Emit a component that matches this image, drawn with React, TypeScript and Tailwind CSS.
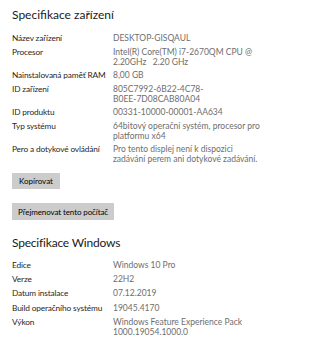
const device: [string, string[]][] = [
  ['Název zařízení', ['DESKTOP-GISQAUL']],
  ['Procesor', ['Intel(R) Core(TM) i7-2670QM CPU @', '2.20GHz   2.20 GHz']],
  ['Nainstalovaná paměť RAM', ['8,00 GB']],
  ['ID zařízení', ['805C7992-6B22-4C78-', 'B0EE-7D08CAB80A04']],
  ['ID produktu', ['00331-10000-00001-AA634']],
  ['Typ systému', ['64bitový operační systém, procesor pro', 'platformu x64']],
  ['Pero a dotykové ovládání', ['Pro tento displej není k dispozici', 'zadávání perem ani dotykové zadávání.']],
]

const windows: [string, string[]][] = [
  ['Edice', ['Windows 10 Pro']],
  ['Verze', ['22H2']],
  ['Datum instalace', ['07.12.2019']],
  ['Build operačního systému', ['19045.4170']],
  ['Výkon', ['Windows Feature Experience Pack', '1000.19054.1000.0']],
]

function SpecRows({ rows, gap }: { rows: [string, string[]][]; gap: string }) {
  return (
    <div className={`flex flex-col ${gap}`}>
      {rows.map(([label, value]) => (
        <div key={label} className="flex items-baseline leading-[10px]">
          <div className="w-[101px] shrink-0 whitespace-nowrap text-[8.3px] tracking-[-0.15px] text-[#1f1f1f]">
            {label}
          </div>
          <div className="text-[8.5px] text-[#6e6e6e] whitespace-pre">
            {value.map((line) => (
              <div key={line}>{line}</div>
            ))}
          </div>
        </div>
      ))}
    </div>
  )
}

export default function App() {
  return (
    <div
      className="w-[318px] h-[340px] bg-white pl-3 pt-[5px] overflow-hidden"
      style={{ fontFamily: 'Lato, "Noto Sans", sans-serif' }}
    >
      <h2 className="text-[12px] leading-[20px] text-[#1a1a1a]">Specifikace zařízení</h2>
      <div className="mt-2">
        <SpecRows rows={device} gap="gap-[3.5px]" />
      </div>

      <button className="mt-[9px] h-4 w-[48px] bg-[#cccccc] text-[8px] leading-[10px] text-black block">
        Kopírovat
      </button>
      <button className="mt-[14px] h-[17px] px-[6px] bg-[#cccccc] text-[8px] tracking-[-0.1px] leading-[10px] text-black block">
        Přejmenovat tento počítač
      </button>

      <h2 className="mt-[13px] text-[12px] tracking-[-0.2px] leading-[20px] text-[#1a1a1a]">Specifikace Windows</h2>
      <div className="mt-[7px]">
        <SpecRows rows={windows} gap="gap-[4.2px]" />
      </div>
    </div>
  )
}
